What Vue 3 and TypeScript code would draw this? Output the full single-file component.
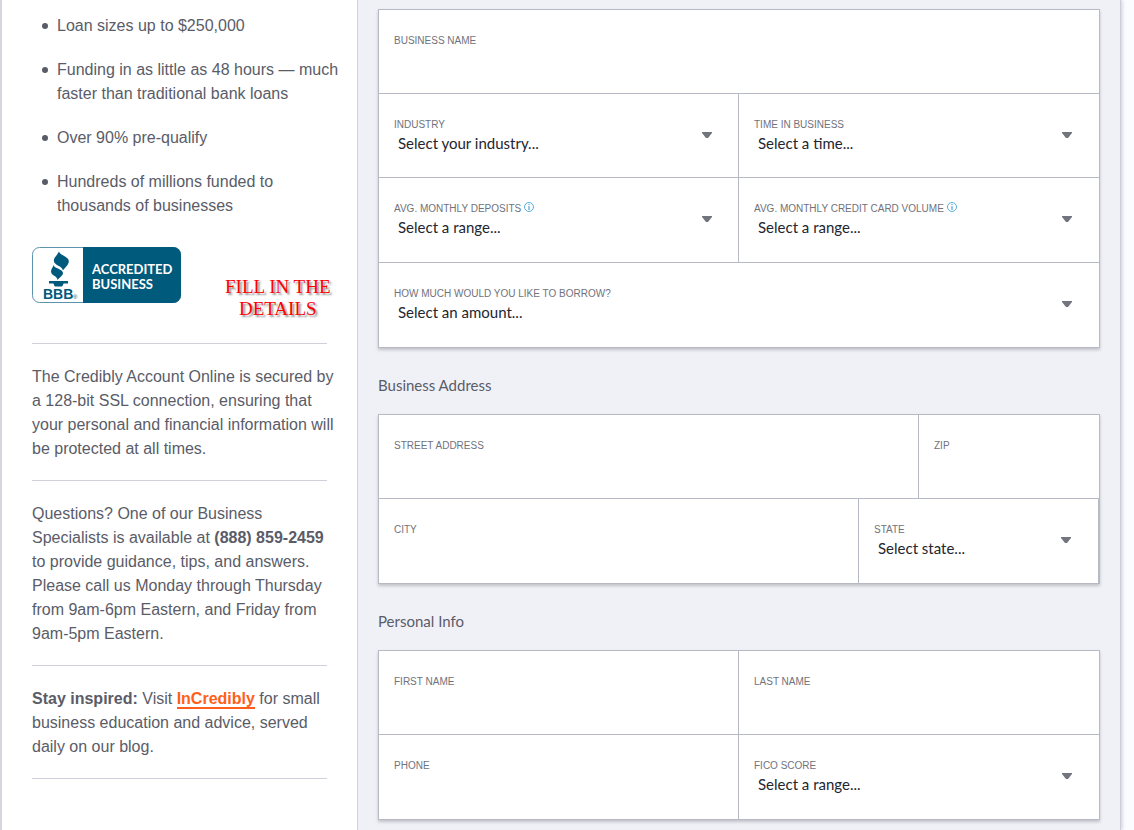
<script setup lang="ts">
interface Field {
  id: string
  label: string
  placeholder?: string
  info?: boolean
}

interface Row {
  layout: 'full' | 'halves' | 'wide-left' | 'two-thirds'
  fields: Field[]
}

interface Section {
  title?: string
  rows: Row[]
}

const sections: Section[] = [
  {
    rows: [
      { layout: 'full', fields: [{ id: 'business-name', label: 'Business Name' }] },
      {
        layout: 'halves',
        fields: [
          { id: 'industry', label: 'Industry', placeholder: 'Select your industry...' },
          { id: 'time', label: 'Time in Business', placeholder: 'Select a time...' },
        ],
      },
      {
        layout: 'halves',
        fields: [
          { id: 'deposits', label: 'Avg. Monthly Deposits', placeholder: 'Select a range...', info: true },
          { id: 'volume', label: 'Avg. Monthly Credit Card Volume', placeholder: 'Select a range...', info: true },
        ],
      },
      {
        layout: 'full',
        fields: [{ id: 'amount', label: 'How much would you like to borrow?', placeholder: 'Select an amount...' }],
      },
    ],
  },
  {
    title: 'Business Address',
    rows: [
      {
        layout: 'wide-left',
        fields: [
          { id: 'street', label: 'Street Address' },
          { id: 'zip', label: 'Zip' },
        ],
      },
      {
        layout: 'two-thirds',
        fields: [
          { id: 'city', label: 'City' },
          { id: 'state', label: 'State', placeholder: 'Select state...' },
        ],
      },
    ],
  },
  {
    title: 'Personal Info',
    rows: [
      {
        layout: 'halves',
        fields: [
          { id: 'first-name', label: 'First Name' },
          { id: 'last-name', label: 'Last Name' },
        ],
      },
      {
        layout: 'halves',
        fields: [
          { id: 'phone', label: 'Phone' },
          { id: 'fico', label: 'FICO Score', placeholder: 'Select a range...' },
        ],
      },
    ],
  },
]
</script>

<template>
  <div class="page">
    <aside class="sidebar">
      <ul class="benefits">
        <li><span>Loan sizes up to $250,000</span></li>
        <li><span>Funding in as little as 48 hours — much<br />faster than traditional bank loans</span></li>
        <li><span>Over 90% pre-qualify</span></li>
        <li><span>Hundreds of millions funded to<br />thousands of businesses</span></li>
      </ul>

      <div class="trust">
        <svg class="badge" viewBox="0 0 149 56" role="img" aria-label="BBB Accredited Business">
          <rect x="0.5" y="0.5" width="148" height="55" rx="7" fill="#fff" stroke="#5b93ad" />
          <path d="M51 0H141a8 8 0 0 1 8 8V48a8 8 0 0 1-8 8H51Z" fill="#005a7c" />
          <g fill="#005a7c">
            <path d="M27 4.500C27.500 8 36.500 9.500 36.800 14C37 17 34.500 19.500 30.800 23.500C31 19 21.800 18.500 21.800 13.500C21.800 10.500 25.500 8 27 4.500Z" />
            <path d="M21.500 18C22 21.500 31 22 31 26C31 28.500 28 30 25.500 33C25.500 29 19 28.500 19 24.500C19 22 21 20.500 21.500 18Z" />
            <path d="M17 34H36V36.500H32.500C30.500 36.500 31.500 38.500 30 39.500H23C21.500 38.500 22.500 36.500 20.500 36.500H17Z" />
          </g>
          <text class="badge-bbb" x="11" y="52">BBB</text>
          <text class="badge-reg" x="41" y="52">®</text>
          <text class="badge-text" x="60" y="27">ACCREDITED</text>
          <text class="badge-text" x="60" y="42">BUSINESS</text>
        </svg>
        <p class="callout">FILL IN THE<br />DETAILS</p>
      </div>

      <hr />
      <p>
        The Credibly Account Online is secured by<br />
        a 128-bit SSL connection, ensuring that<br />
        your personal and financial information will<br />
        be protected at all times.
      </p>
      <hr />
      <p>
        Questions? One of our Business<br />
        Specialists is available at <strong>(888) 859-2459</strong><br />
        to provide guidance, tips, and answers.<br />
        Please call us Monday through Thursday<br />
        from 9am-6pm Eastern, and Friday from<br />
        9am-5pm Eastern.
      </p>
      <hr />
      <p>
        <strong>Stay inspired:</strong> Visit <a href="#">InCredibly</a> for small<br />
        business education and advice, served<br />
        daily on our blog.
      </p>
      <hr />
    </aside>

    <main class="content">
      <form>
        <section v-for="(section, i) in sections" :key="i">
          <h2 v-if="section.title">{{ section.title }}</h2>
          <div class="card">
            <div v-for="(row, r) in section.rows" :key="r" class="row" :class="row.layout">
              <div v-for="field in row.fields" :key="field.id" class="cell">
                <label :for="field.id">
                  {{ field.label }}
                  <svg v-if="field.info" class="info" viewBox="0 0 10 10" aria-hidden="true">
                    <circle cx="5" cy="5" r="4.5" fill="none" stroke="#57aedd" />
                    <path d="M4.500 2h1v1h-1zM4.500 4h1v4h-1z" fill="#2f94cf" />
                  </svg>
                </label>
                <template v-if="field.placeholder">
                  <select :id="field.id">
                    <option>{{ field.placeholder }}</option>
                  </select>
                  <svg class="arrow" viewBox="0 0 10 6" aria-hidden="true">
                    <path d="M0 0H10V1L6 6H4L0 1Z" fill="#73757e" />
                  </svg>
                </template>
                <input v-else :id="field.id" type="text" />
              </div>
            </div>
          </div>
        </section>
      </form>
    </main>
  </div>
</template>

<style>
body {
  margin: 0;
  background: #fbfcff;
}
</style>

<style scoped>
* {
  box-sizing: border-box;
}

.page {
  display: grid;
  grid-template-columns: 356px 1fr;
  min-height: 100vh;
  margin-right: 13px;
  border-left: 2px solid #d5d5e0;
  border-right: 1px solid #cdced9;
  background: #f0f1f7;
  box-shadow: 1px 0 4px rgba(0, 0, 0, 0.2);
  font-family: "Liberation Sans", Arial, sans-serif;
  color: #5a5c68;
}

.sidebar {
  padding: 14px 30px 0;
  border-right: 1px solid #d0d1db;
  background: #fff;
  font-size: 16px;
  line-height: 24px;
  white-space: nowrap;
}

.benefits {
  display: flex;
  flex-direction: column;
  gap: 20px;
  margin: 0 0 29px;
  padding-left: 10px;
  list-style: none;
}

.benefits li {
  display: flex;
  gap: 9px;
}

.benefits li::before {
  content: "";
  flex: none;
  width: 6px;
  height: 6px;
  margin-top: 9px;
  border-radius: 50%;
  background: #5a5c68;
}

.trust {
  display: flex;
  gap: 44px;
  height: 96px;
}

.badge {
  flex: none;
  width: 149px;
  height: 56px;
}

.badge text {
  font-family: "Liberation Sans", Arial, sans-serif;
  font-weight: 700;
  fill: #005a7c;
}

.badge .badge-bbb {
  font-size: 14px;
}

.badge .badge-reg {
  font-size: 6px;
  font-weight: 400;
}

.badge .badge-text {
  font-family: Lato, sans-serif;
  font-size: 13px;
  fill: #fff;
}

.callout {
  flex: none;
  margin: 0;
  padding-top: 29px;
  font-family: "Liberation Serif", "Times New Roman", serif;
  font-size: 19px;
  line-height: 22px;
  text-align: center;
  color: #f00;
  text-shadow: 2px 2px 2px rgba(0, 0, 0, 0.45);
}

.sidebar hr {
  margin: 0;
  border: 0;
  border-top: 1px solid #d0d1dc;
}

.sidebar > p {
  margin: 21px 0 19px;
}

.sidebar a {
  border-bottom: 2px solid #ff5f1a;
  font-weight: 700;
  text-decoration: none;
  color: #ff5f1a;
}

.content {
  padding: 9px 20px 10px;
}

h2 {
  margin: 25px 0 17px;
  font-family: Lato, sans-serif;
  font-size: 15px;
  font-weight: 400;
  line-height: 24px;
}

.card {
  border: 1px solid #b7b9c5;
  border-bottom: 0;
  background: #fff;
  box-shadow: 0 2px 3px rgba(0, 0, 0, 0.2);
}

.row {
  display: grid;
  min-height: 84px;
  border-bottom: 1px solid #b7b9c5;
}

.row:nth-child(n + 3),
.row:last-child {
  min-height: 85px;
}

.halves {
  grid-template-columns: 1fr 1fr;
}

.wide-left {
  grid-template-columns: 3fr 1fr;
}

.two-thirds {
  grid-template-columns: 2fr 1fr;
}

.cell {
  position: relative;
  display: flex;
  flex-direction: column;
  padding: 23px 15px 8px;
}

.cell:not(:last-child),
.two-thirds .cell {
  border-right: 1px solid #b7b9c5;
}

label {
  font-size: 10px;
  line-height: 16px;
  text-transform: uppercase;
  color: #70727c;
}

.info {
  width: 10px;
  height: 10px;
}

select,
input {
  width: 100%;
  height: 20px;
  margin: 0;
  padding: 0 4px;
  border: 0;
  outline: 0;
  background: transparent;
  font-family: Lato, sans-serif;
  font-size: 15px;
  color: #23252f;
  appearance: none;
}

.arrow {
  position: absolute;
  top: 38px;
  right: 26px;
  width: 10px;
  height: 6px;
  pointer-events: none;
}

.cell:last-child .arrow {
  right: 27px;
}
</style>
